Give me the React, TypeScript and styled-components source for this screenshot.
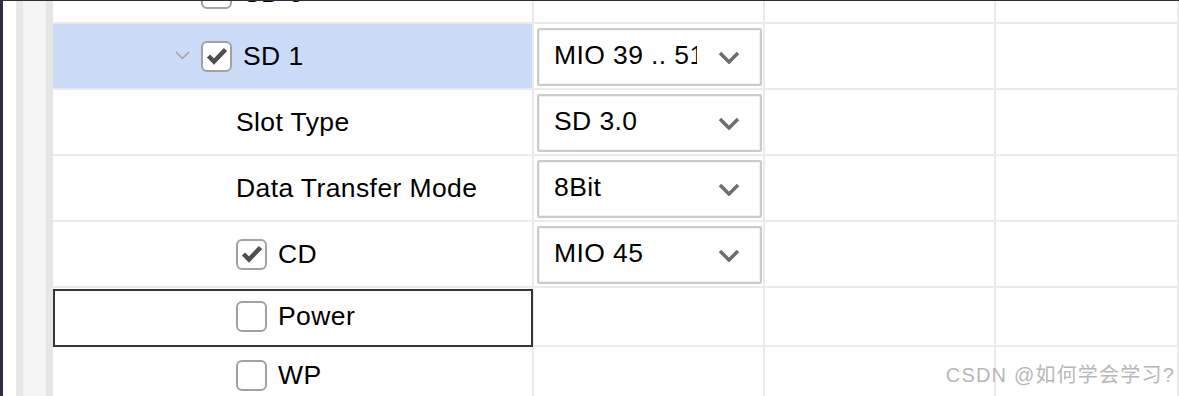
import React from "react";
import styled, { createGlobalStyle } from "styled-components";

type Row = {
  label: string;
  level: number;
  check?: boolean;
  expand?: boolean;
  value?: string;
  selected?: boolean;
  focused?: boolean;
};

const rows: Row[] = [
  { label: "SD 0", level: 0, check: false },
  { label: "SD 1", level: 0, check: true, expand: true, value: "MIO 39 .. 51", selected: true },
  { label: "Slot Type", level: 1, value: "SD 3.0" },
  { label: "Data Transfer Mode", level: 1, value: "8Bit" },
  { label: "CD", level: 1, check: true, value: "MIO 45" },
  { label: "Power", level: 1, check: false, focused: true },
  { label: "WP", level: 1, check: false },
];

const App = () => {
  return (
    <>
      <GlobalStyle />
      <Frame>
        <Strip $w={13} $bg="#ffffff" />
        <Strip $w={7} $bg="#e8e8e8" />
        <Strip $w={23} $bg="#f5f5f5" />
        <Strip $w={7} $bg="#e6e6e6" />
        <Table>
          {rows.map((r) => (
            <TableRow key={r.label} $h={r.value ? 66 : 59}>
              <NameCell $level={r.level} $selected={!!r.selected} $focused={!!r.focused}>
                <Twisty>
                  {r.expand && (
                    <svg width="15" height="9" viewBox="0 0 15 9">
                      <polyline points="1,1 7.5,7.5 14,1" fill="none" stroke="#a3a3a3" strokeWidth="1.5" />
                    </svg>
                  )}
                </Twisty>
                {r.check !== undefined && (
                  <Box>
                    {r.check && (
                      <svg width="26" height="26" viewBox="0 0 26 26">
                        <path d="M4.5 13 L10 18.5 L21.5 6.5" fill="none" stroke="#4f4f4f" strokeWidth="4.5" />
                      </svg>
                    )}
                  </Box>
                )}
                <Label $boxed={r.check !== undefined}>{r.label}</Label>
              </NameCell>
              <Cell $pad>
                {r.value && (
                  <Select>
                    <SelectText>{r.value}</SelectText>
                    <svg width="22" height="13" viewBox="0 0 22 13">
                      <polyline points="2,2 11,11 20,2" fill="none" stroke="#6e6e6e" strokeWidth="3.5" />
                    </svg>
                  </Select>
                )}
              </Cell>
              <Cell />
              <Cell />
            </TableRow>
          ))}
        </Table>
        <Watermark>CSDN @如何学会学习?</Watermark>
      </Frame>
    </>
  );
};

export default App;

const GlobalStyle = createGlobalStyle`
  html, body {
    margin: 0;
    background: #2d2f3d;
    overflow: hidden;
  }
`;

const Frame = styled.div`
  position: relative;
  display: flex;
  height: 395px;
  margin-top: 1px;
  padding-left: 3px;
  overflow: hidden;
  font-family: "Liberation Sans", Arial, sans-serif;
  color: #000;
`;

const Strip = styled.div<{ $w: number; $bg: string }>`
  flex: 0 0 ${({ $w }) => $w}px;
  background: ${({ $bg }) => $bg};
`;

const Table = styled.div`
  flex: 1;
  display: flex;
  flex-direction: column;
  margin-top: -36px;
  background: #fff;
`;

const TableRow = styled.div<{ $h: number }>`
  display: grid;
  grid-template-columns: 481px 231px 231px 1fr;
  flex: 0 0 ${({ $h }) => $h}px;
`;

const Cell = styled.div<{ $pad?: boolean }>`
  display: flex;
  align-items: center;
  border-right: 2px solid #ebebeb;
  border-bottom: 2px solid #ebebeb;
  padding: ${({ $pad }) => ($pad ? "1px 1px 0 3px" : "0")};
  min-width: 0;
`;

const NameCell = styled(Cell)<{ $level: number; $selected: boolean; $focused: boolean }>`
  position: relative;
  padding-left: ${({ $level }) => 122 + $level * 35}px;
  background: ${({ $selected }) => ($selected ? "#cbdcf9" : "#fff")};

  &::after {
    content: "";
    display: ${({ $focused }) => ($focused ? "block" : "none")};
    position: absolute;
    top: 1px;
    left: 0;
    right: -1px;
    bottom: -2px;
    border: 2px solid #353535;
  }
`;

const Twisty = styled.span`
  flex: 0 0 26px;
  display: flex;
  align-items: center;
  padding-bottom: 2px;
`;

const Box = styled.span`
  flex: 0 0 31px;
  height: 31px;
  box-sizing: border-box;
  border: 2.5px solid #a2a2a2;
  border-radius: 6px;
  background: #fff;
  display: flex;
  align-items: center;
  justify-content: center;
`;

const Label = styled.span<{ $boxed: boolean }>`
  margin-left: ${({ $boxed }) => ($boxed ? "11px" : "0")};
  font-size: 26.5px;
  letter-spacing: 0.4px;
  white-space: nowrap;
`;

const Select = styled.div`
  flex: 1;
  height: 58px;
  box-sizing: border-box;
  display: flex;
  align-items: center;
  padding: 0 20px 0 15px;
  border: 2px solid #cbcbcb;
  border-radius: 2px;
  box-shadow: inset 0 0 0 1px #f1f1f1;
  background: #fff;

  svg {
    margin-left: auto;
    margin-top: 2px;
  }
`;

const SelectText = styled.span`
  width: 143px;
  overflow: hidden;
  white-space: nowrap;
  font-size: 26.5px;
  letter-spacing: 0.4px;
  padding-bottom: 2px;
`;

const Watermark = styled.div`
  position: absolute;
  right: 4px;
  bottom: 8px;
  font-family: "Liberation Sans", "Noto Sans CJK SC", sans-serif;
  font-size: 20px;
  letter-spacing: 1.2px;
  color: #b8b8b8;
  text-shadow: 0 0 1px rgba(255, 255, 255, 0.8);
  white-space: nowrap;
`;
